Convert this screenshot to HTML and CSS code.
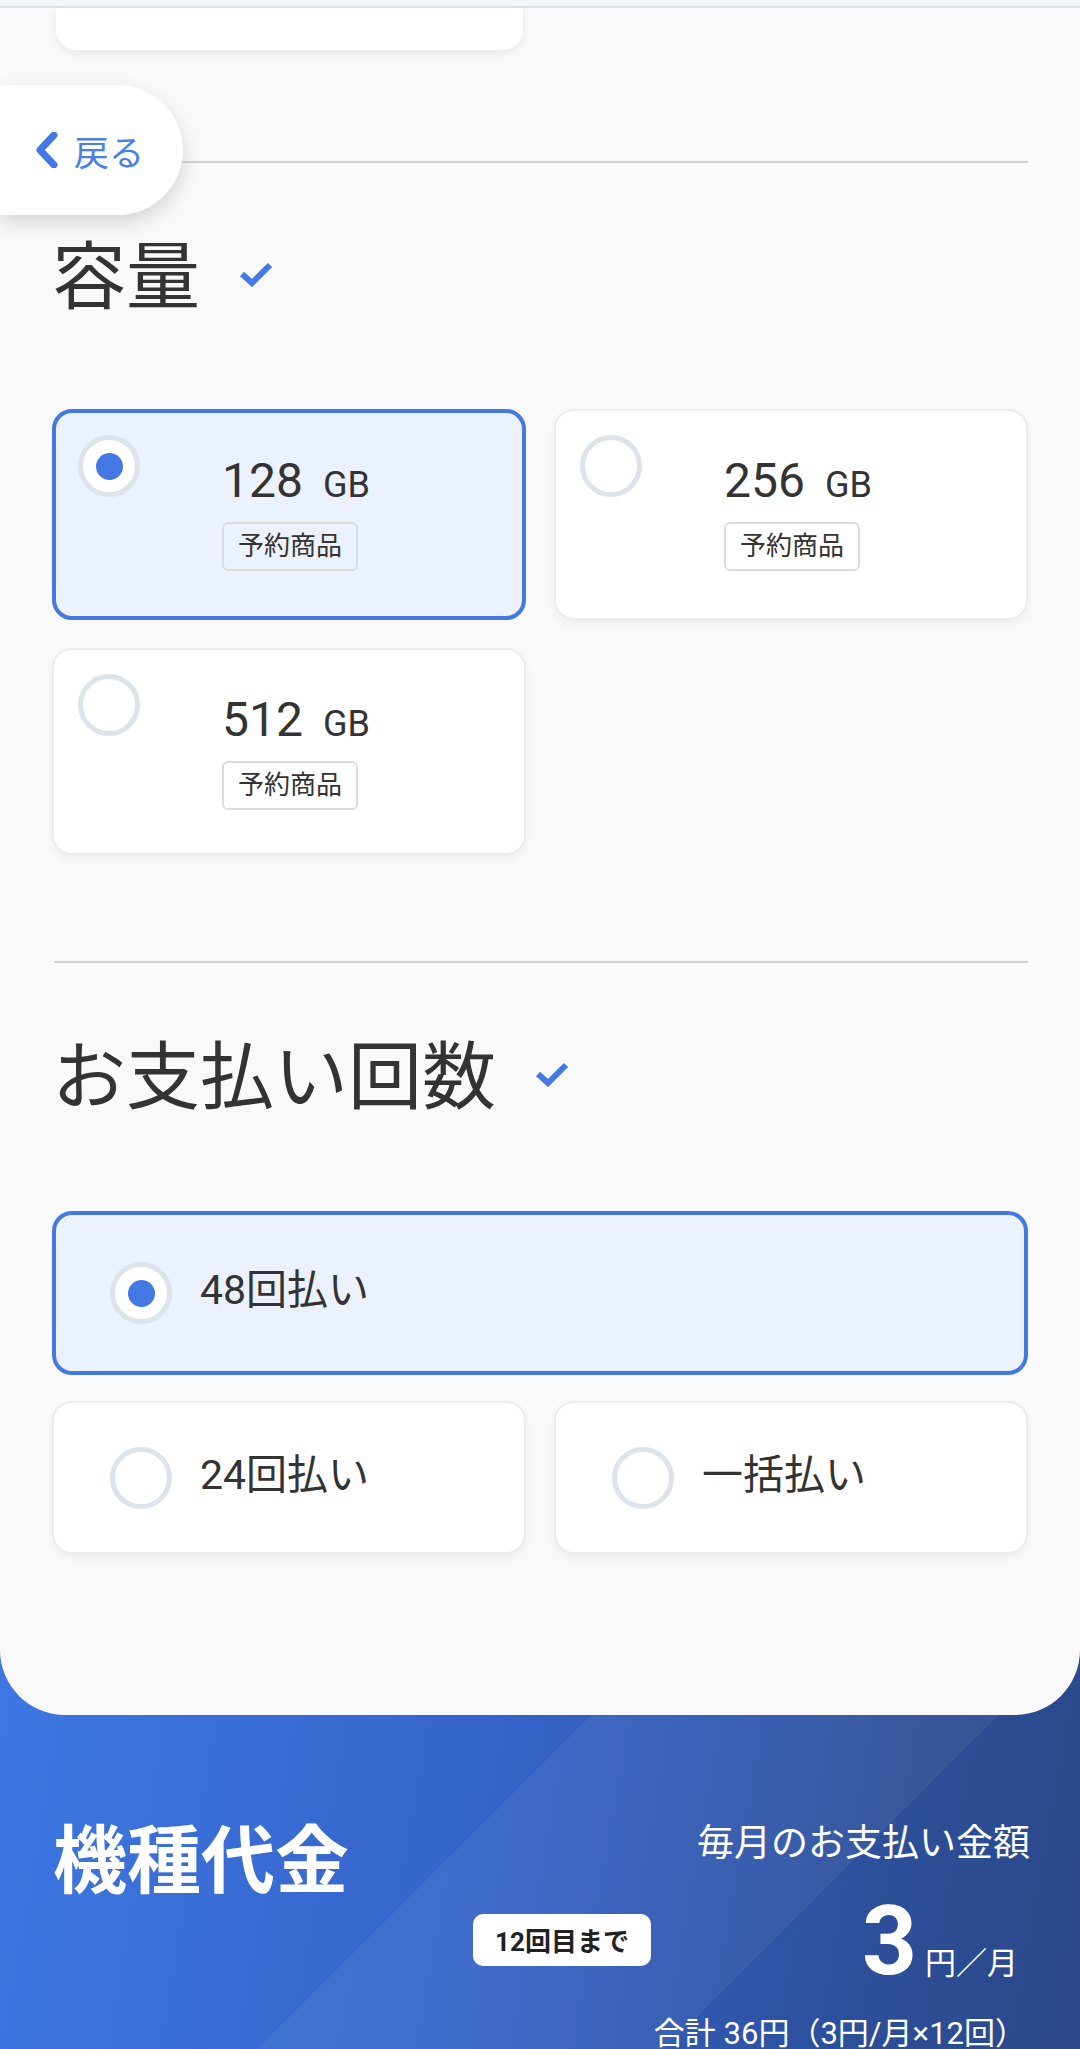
FILE: index.html
```html
<!DOCTYPE html>
<html lang="ja">
<head>
    <meta charset="UTF-8">
    <meta name="viewport" content="width=device-width, initial-scale=1.0">
    <title>機種選択</title>
    <link rel="stylesheet" href="styles.css">
</head>
<body>
    <div class="topbar"></div>

    <main class="panel">
        <div class="card-stub"></div>

        <hr class="divider">
        <h2 class="section-title">容量
            <svg class="check" viewBox="0 0 36 26"><polyline points="4,13 14,22 32,4" /></svg>
        </h2>

        <!-- 容量の選択肢 -->
        <div class="capacity-grid">
            <div class="option selected">
                <span class="radio"></span>
                <div class="option-body">
                    <span class="capacity">128<span class="unit">GB</span></span>
                    <span class="tag">予約商品</span>
                </div>
            </div>
            <div class="option">
                <span class="radio"></span>
                <div class="option-body">
                    <span class="capacity">256<span class="unit">GB</span></span>
                    <span class="tag">予約商品</span>
                </div>
            </div>
            <div class="option">
                <span class="radio"></span>
                <div class="option-body">
                    <span class="capacity">512<span class="unit">GB</span></span>
                    <span class="tag">予約商品</span>
                </div>
            </div>
        </div>

        <hr class="divider divider-pay">
        <h2 class="section-title">お支払い回数
            <svg class="check" viewBox="0 0 36 26"><polyline points="4,13 14,22 32,4" /></svg>
        </h2>

        <!-- お支払い回数の選択肢 -->
        <div class="pay-grid">
            <div class="pay-option wide selected">
                <span class="radio"></span>
                <span class="pay-label">48回払い</span>
            </div>
            <div class="pay-option">
                <span class="radio"></span>
                <span class="pay-label">24回払い</span>
            </div>
            <div class="pay-option">
                <span class="radio"></span>
                <span class="pay-label">一括払い</span>
            </div>
        </div>
    </main>

    <a href="#" class="back-button">
        <svg class="chevron" viewBox="0 0 22 36"><polyline points="18,3 4,18 18,33" /></svg>
        戻る
    </a>

    <section class="price">
        <div class="price-head">
            <h2 class="price-title">機種代金</h2>
            <p class="price-label">毎月のお支払い金額</p>
        </div>
        <div class="price-row">
            <span class="badge">12回目まで</span>
            <span class="amount">3<small>円／月</small></span>
        </div>
        <p class="price-total">合計 36円（3円/月×12回）</p>
    </section>
</body>
</html>
```

FILE: styles.css
```css
body { margin: 0; font-family: Roboto, "Noto Sans CJK JP", sans-serif; color: #333; background: #2d4f99; position: relative; overflow: hidden; }
.topbar { height: 6px; background: #f3f7fc; border-bottom: 2px solid #dce3ed; }

.panel { position: relative; z-index: 1; background: #f9f9f9; padding: 0 52px 161px; border-radius: 0 0 65px 65px; }
.card-stub { margin-left: 4px; width: 467px; height: 42px; background: #fff; border-radius: 0 0 20px 20px; box-shadow: 0 3px 8px rgba(0, 0, 0, 0.08); }
.divider { border: 0; height: 2px; background: #d2d2d2; margin: 111px 0 0 2px; }
.divider-pay { margin-top: 106px; }

.section-title { display: flex; align-items: center; gap: 38px; margin: 60px 0 0; font-size: 74px; font-weight: 400; line-height: 110px; color: #333; }
.check { width: 36px; height: 26px; margin-bottom: 8px; fill: none; stroke: #4479e4; stroke-width: 6; }

.capacity-grid { display: grid; grid-template-columns: 1fr 1fr; gap: 28px; margin-top: 76px; }
.option { display: flex; align-items: flex-start; padding: 24px 24px 43px; border: 2px solid #ececec; border-radius: 20px; background: #fff; box-shadow: 0 4px 8px rgba(0, 0, 0, 0.05); }
.option.selected { padding: 22px 22px 45px; border: 4px solid #4479e4; background: #ebf1fd; box-shadow: none; }
.option-body { margin: 22px 0 0 82px; display: flex; flex-direction: column; align-items: flex-start; gap: 13px; }
.capacity { font-size: 48px; line-height: 48px; }
.unit { font-size: 36px; margin-left: 20px; }
.tag { font-size: 26px; line-height: 33px; padding: 6px 14px; border: 2px solid #dcdcdc; border-radius: 6px; }

.radio { flex: none; width: 62px; height: 62px; box-sizing: border-box; border: 5px solid #dde3ea; border-radius: 50%; background: #fff; display: flex; align-items: center; justify-content: center; }
.selected .radio::after { content: ""; width: 27px; height: 27px; border-radius: 50%; background: #4479e4; }

.pay-grid { display: grid; grid-template-columns: 1fr 1fr; gap: 26px 28px; margin-top: 78px; }
.pay-option { display: flex; align-items: center; gap: 28px; padding: 44px 56px 43px; border: 2px solid #ececec; border-radius: 20px; background: #fff; box-shadow: 0 4px 8px rgba(0, 0, 0, 0.05); }
.pay-option.wide { grid-column: 1 / -1; }
.pay-option.selected { padding: 47px 54px; border: 4px solid #4479e4; background: #ebf1fd; box-shadow: none; }
.pay-label { font-size: 41px; line-height: 50px; margin-top: -6px; }

.back-button { position: absolute; z-index: 2; left: 0; top: 85px; width: 183px; height: 130px; box-sizing: border-box; padding-left: 36px; display: flex; align-items: center; gap: 16px; background: #fff; border-radius: 0 65px 65px 0; box-shadow: 0 8px 20px rgba(0, 0, 0, 0.15); color: #4a80e8; font-size: 35px; text-decoration: none; }
.chevron { width: 22px; height: 36px; fill: none; stroke: #4479e4; stroke-width: 7; stroke-linecap: round; stroke-linejoin: round; }

.price { margin-top: -65px; padding: 169px 50px 80px 53px; color: #fff;
    background:
        linear-gradient(135deg, rgba(255, 255, 255, 0) 42%, rgba(255, 255, 255, 0.05) 42%, rgba(255, 255, 255, 0.05) 68%, rgba(255, 255, 255, 0) 68%),
        linear-gradient(100deg, #3d77e2 0%, #3563c9 45%, #2d4f99 80%, #2a4788 100%); }
.price-head { display: flex; justify-content: space-between; align-items: flex-start; }
.price-title { margin: 0; font-size: 74px; font-weight: 700; line-height: 86px; }
.price-label { margin: 0; font-size: 37px; line-height: 50px; }
.price-row { display: flex; justify-content: flex-end; align-items: center; padding-right: 12px; }
.badge { margin: 0 211px 26px 0; height: 52px; padding: 0 22px; display: flex; align-items: center; background: #fff; color: #222; border-radius: 10px; font-size: 26px; font-weight: 700; }
.amount { font-size: 96px; font-weight: 700; line-height: 72px; }
.amount small { font-size: 31px; font-weight: 400; margin-left: 8px; }
.price-total { margin: 14px 0 0; text-align: right; padding-right: 4px; font-size: 31px; line-height: 40px; }
```
